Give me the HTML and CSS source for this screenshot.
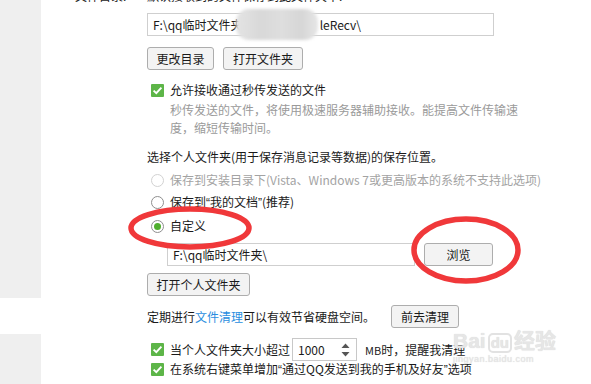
FILE: index.html
```html
<!DOCTYPE html>
<html>
<head>
<meta charset="utf-8">
<link rel="stylesheet" href="styles.css">
</head>
<body>
<div class="page">
  <div class="sidebar">
    <div class="side-gray side-top"></div>
    <div class="side-gap"></div>
    <div class="side-gray side-bottom"></div>
  </div>
  <div class="main">
    <div class="cut-row"><span class="cut-label">文件目录:</span><span>默认接收到的文件保存到此文件夹中:</span></div>
    <div class="field field-1">F:\qq临时文件夹<span class="hidden-part">xxxxxxxxxxxxxxxxx</span><span class="tail">leRecv\</span></div>
    <div class="btn-row row-1">
      <button class="btn btn-a">更改目录</button>
      <button class="btn btn-b">打开文件夹</button>
    </div>
    <div class="check-row row-2">
      <span class="check"><svg width="13" height="13" viewBox="0 0 13 13"><rect width="13" height="13" rx="1" fill="#5db548"/><path d="M2.6 6.6 L5.3 9.2 L10.4 3.6" fill="none" stroke="#fff" stroke-width="1.9"/></svg></span>
      <span>允许接收通过秒传发送的文件</span>
    </div>
    <div class="desc">秒传发送的文件，将使用极速服务器辅助接收。能提高文件传输速<br>度，缩短传输时间。</div>
    <div class="heading">选择个人文件夹(用于保存消息记录等数据)的保存位置。</div>
    <div class="radio-row radio-1 disabled"><span class="radio"></span><span>保存到安装目录下(Vista、Windows 7或更高版本的系统不支持此选项)</span></div>
    <div class="radio-row radio-2"><span class="radio"></span><span>保存到<span class="q">“</span>我的文档<span class="q">”</span>(推荐)</span></div>
    <div class="radio-row radio-3"><span class="radio on"><span class="dot"></span></span><span>自定义</span></div>
    <div class="path-row">
      <div class="field field-2">F:\qq临时文件夹\</div>
      <button class="btn btn-browse">浏览</button>
    </div>
    <button class="btn btn-open">打开个人文件夹</button>
    <div class="clean-row">
      <span>定期进行<span class="link">文件清理</span>可以有效节省硬盘空间。</span>
      <button class="btn btn-clean">前去清理</button>
    </div>
    <div class="check-row row-size">
      <span class="check"><svg width="13" height="13" viewBox="0 0 13 13"><rect width="13" height="13" rx="1" fill="#5db548"/><path d="M2.6 6.6 L5.3 9.2 L10.4 3.6" fill="none" stroke="#fff" stroke-width="1.9"/></svg></span>
      <span>当个人文件夹大小超过</span>
      <div class="spin"><span>1000</span><svg class="arrows" width="9" height="16" viewBox="0 0 9 16"><path d="M0.5 6 L4.5 1.5 L8.5 6 Z" fill="#555"/><path d="M0.5 10 L4.5 14.5 L8.5 10 Z" fill="#555"/></svg></div>
      <span class="unit"><span class="mb">MB</span>时<span class="comma">，</span>提醒我清理</span>
    </div>
    <div class="check-row row-menu">
      <span class="check"><svg width="13" height="13" viewBox="0 0 13 13"><rect width="13" height="13" rx="1" fill="#5db548"/><path d="M2.6 6.6 L5.3 9.2 L10.4 3.6" fill="none" stroke="#fff" stroke-width="1.9"/></svg></span>
      <span>在系统右键菜单增加<span class="q">“</span>通过QQ发送到我的手机及好友<span class="q">”</span>选项</span>
    </div>

    <div class="blur"></div>
    <div class="watermark">
      <div class="wm-main">Bai<span class="wm-du">du</span>经验</div>
      <div class="wm-sub">jingyan.baidu.com</div>
    </div>
  </div>
  <svg class="marks" width="591" height="384" viewBox="0 0 591 384">
    <ellipse cx="190" cy="228" rx="59" ry="19" fill="none" stroke="#f0383a" stroke-width="5.5"/>
    <ellipse cx="466" cy="250" rx="52" ry="31" fill="none" stroke="#f0383a" stroke-width="5.5"/>
  </svg>
</div>
</body>
</html>
```

FILE: styles.css
```css
* { box-sizing: border-box; }
html, body { margin: 0; padding: 0; background: #fff; }
body {
  width: 591px;
  height: 384px;
  overflow: hidden;
  font-family: "Noto Sans CJK SC", "Microsoft YaHei", sans-serif;
  font-size: 12px;
  color: #1a1a1a;
}
.page {
  position: relative;
  display: flex;
  width: 591px;
  height: 384px;
}
.sidebar {
  width: 41px;
  display: flex;
  flex-direction: column;
}
.side-gray { background: #efefef; }
.side-top { height: 298px; }
.side-gap { height: 36px; background: #fff; }
.side-bottom { flex: 1; }

.main {
  position: relative;
  flex: 1;
  padding-left: 106px;
  line-height: 16px;
}
.cut-row {
  height: 16px;
  margin-top: -12px;
  display: flex;
  color: #222;
}
.cut-label { margin-left: -72px; width: 72px; }

.field {
  height: 23px;
  border: 1px solid #cfcfcf;
  background: #fff;
  padding-left: 5px;
  line-height: 21px;
  white-space: nowrap;
  overflow: hidden;
}
.field-1 { margin-top: 9px; width: 347px; }
.hidden-part { color: transparent; letter-spacing: -1.5px; }
.tail { margin-left: 1px; }

.btn {
  font-family: inherit;
  font-size: 12px;
  color: #1a1a1a;
  height: 23px;
  border: 1px solid #adadad;
  border-radius: 3px;
  background: #f3f3f3;
  padding: 0;
  line-height: 20px;
  margin: 0;
}
.btn-row { display: flex; gap: 9px; margin-top: 11px; }
.btn-a { width: 67px; }
.btn-b { width: 80px; }

.check-row {
  display: flex;
  align-items: center;
  height: 16px;
  padding-left: 4px;
}
.check { width: 13px; height: 13px; margin-right: 6px; display: block; }
.check svg { display: block; }
.row-2 { margin-top: 12px; }
.desc {
  margin-top: 3px;
  padding-left: 23px;
  color: #9a9a9a;
  line-height: 18px;
}
.heading { margin-top: 12px; }

.q { font-family: "Liberation Sans", sans-serif; }

.radio-row {
  display: flex;
  align-items: center;
  height: 16px;
  padding-left: 4px;
}
.radio {
  width: 13px;
  height: 13px;
  border: 1px solid #8f8f8f;
  border-radius: 50%;
  margin-right: 6px;
  background: #fff;
  display: flex;
  align-items: center;
  justify-content: center;
}
.disabled { color: #a3a3a3; }
.disabled .radio { border-color: #d2d2d2; }
.radio-1 { margin-top: 7px; }
.radio-2 { margin-top: 6px; }
.radio-3 { margin-top: 8px; }
.dot { width: 7px; height: 7px; border-radius: 50%; background: #4fae2e; }

.path-row {
  display: flex;
  gap: 9px;
  margin-top: 9px;
  padding-left: 20px;
}
.field-2 { width: 248px; }
.btn-browse { width: 69px; }
.btn-open { width: 103px; margin-top: 7px; display: block; }

.clean-row {
  display: flex;
  align-items: center;
  margin-top: 9px;
  height: 23px;
}
.link { color: #2a8ee0; }
.btn-clean { width: 68px; margin-left: 16px; }

.row-size { height: 23px; margin-top: 10px; }
.spin {
  width: 65px;
  height: 23px;
  border: 1px solid #c8c8c8;
  margin-left: 2px;
  padding-left: 5px;
  line-height: 20px;
  display: flex;
  align-items: center;
  justify-content: space-between;
  padding-right: 6px;
}
.unit { margin-left: 8px; }
.mb { font-size: 11px; }
.comma { display: inline-block; width: 12px; }
.row-menu { margin-top: 0px; }

.blur {
  position: absolute;
  left: 195px;
  top: 9px;
  width: 82px;
  height: 31px;
  border-radius: 13px;
  background: linear-gradient(90deg, #e4e4e4 0%, #d8d8d8 30%, #dedede 55%, #d6d6d6 80%, #e6e6e6 100%);
  filter: blur(1.5px);
}
.watermark {
  position: absolute;
  left: 412px;
  top: 328px;
  color: #e6e6e6;
  font-family: "Liberation Sans", "Noto Sans CJK SC", sans-serif;
  text-shadow: 0 0 1px #d4d4d4;
}
.wm-main { font-size: 21px; font-weight: bold; line-height: 26px; }
.wm-du {
  display: inline-block;
  border: 2px solid #e2e2e2;
  border-radius: 5px;
  font-size: 15px;
  line-height: 16px;
  padding: 0 1px;
  margin: 0 2px;
}
.wm-sub { font-size: 9px; line-height: 10px; letter-spacing: 0.5px; }

.marks {
  position: absolute;
  left: 0;
  top: 0;
  pointer-events: none;
}
```
